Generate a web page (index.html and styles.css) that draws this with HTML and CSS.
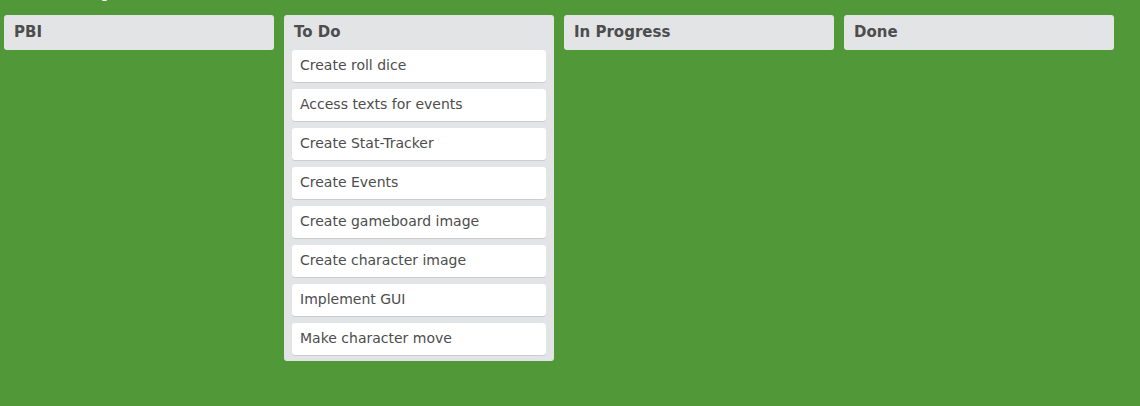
FILE: index.html
```html
<!DOCTYPE html>
<html lang="en">
<head>
<meta charset="utf-8">
<title>Board</title>
<link rel="stylesheet" href="styles.css">
</head>
<body>
<h1 class="board-title">Team Sprint</h1>
<main class="board">
  <section class="list">
    <h2 class="list-title">PBI</h2>
  </section>
  <section class="list">
    <h2 class="list-title">To Do</h2>
    <div class="cards">
      <div class="card">Create roll dice</div>
      <div class="card">Access texts for events</div>
      <div class="card">Create Stat-Tracker</div>
      <div class="card">Create Events</div>
      <div class="card">Create gameboard image</div>
      <div class="card">Create character image</div>
      <div class="card">Implement GUI</div>
      <div class="card">Make character move</div>
    </div>
  </section>
  <section class="list">
    <h2 class="list-title">In Progress</h2>
  </section>
  <section class="list">
    <h2 class="list-title">Done</h2>
  </section>
</main>
</body>
</html>
```

FILE: styles.css
```css
html, body {
  margin: 0;
  padding: 0;
}
body {
  background: #519839;
  font-family: "DejaVu Sans", sans-serif;
  color: #4d4d4d;
  height: 406px;
  overflow: hidden;
}
.board-title {
  margin: -26px 0 0 0;
  padding-left: 4px;
  font-size: 24px;
  line-height: 28px;
  font-weight: bold;
  color: #fff;
}
.board {
  display: flex;
  align-items: flex-start;
  gap: 10px;
  padding: 13px 4px 0;
}
.list {
  width: 270px;
  flex: 0 0 270px;
  background: #e2e4e6;
  border-radius: 3px;
}
.list-title {
  margin: 0;
  padding: 8px 10px 9px;
  font-size: 15px;
  line-height: 18px;
  font-weight: bold;
  color: #4d4d4d;
}
.cards {
  display: flex;
  flex-direction: column;
  gap: 7px;
  padding: 0 8px 6px;
}
.card {
  background: #fff;
  border-radius: 3px;
  box-shadow: 0 1px 0 #ccc;
  padding: 5px 8px 7px;
  font-size: 14px;
  line-height: 20px;
  color: #4d4d4d;
}
```
